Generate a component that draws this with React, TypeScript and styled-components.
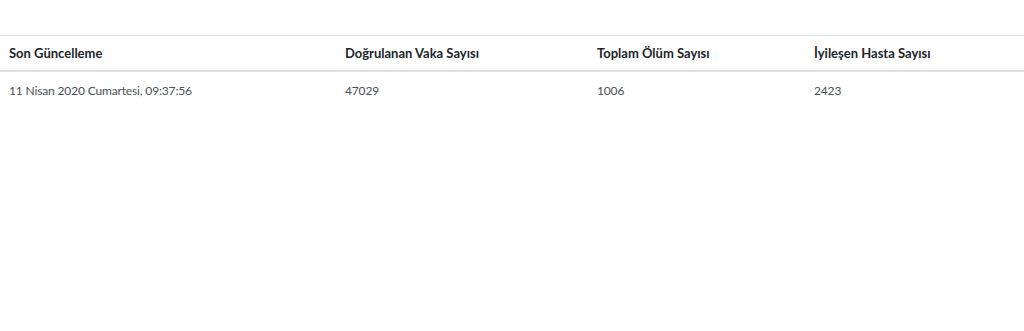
import styled, { createGlobalStyle } from "styled-components"

const GlobalStyle = createGlobalStyle`
  body {
    margin: 0;
    background: #fff;
    font-family: Lato, "Open Sans", sans-serif;
    font-size: 13px;
    color: #212529;
  }
`

const Page = styled.div`
  padding-top: 35px;
`

const Table = styled.table`
  width: 100%;
  border-collapse: collapse;
  table-layout: fixed;
`

const Th = styled.th<{ $w: number }>`
  box-sizing: border-box;
  width: ${(p) => p.$w}px;
  text-align: left;
  font-weight: 700;
  color: #212529;
  padding: 10px 9px 9px;
  line-height: 15px;
  border-top: 1px solid #dee2e6;
  border-bottom: 2px solid #dee2e6;
`

const Td = styled.td`
  padding: 11px 9px 10px;
  font-size: 12px;
  letter-spacing: -0.15px;
  line-height: 15px;
  color: #495057;
`

const columns = [
  { title: "Son Güncelleme", width: 336 },
  { title: "Doğrulanan Vaka Sayısı", width: 252 },
  { title: "Toplam Ölüm Sayısı", width: 217 },
  { title: "İyileşen Hasta Sayısı", width: 219 },
]

const row = ["11 Nisan 2020 Cumartesi, 09:37:56", "47029", "1006", "2423"]

export default function App() {
  return (
    <>
      <GlobalStyle />
      <Page>
        <Table>
          <thead>
            <tr>
              {columns.map((c) => (
                <Th key={c.title} $w={c.width}>
                  {c.title}
                </Th>
              ))}
            </tr>
          </thead>
          <tbody>
            <tr>
              {row.map((v, i) => (
                <Td key={i}>{v}</Td>
              ))}
            </tr>
          </tbody>
        </Table>
      </Page>
    </>
  )
}
